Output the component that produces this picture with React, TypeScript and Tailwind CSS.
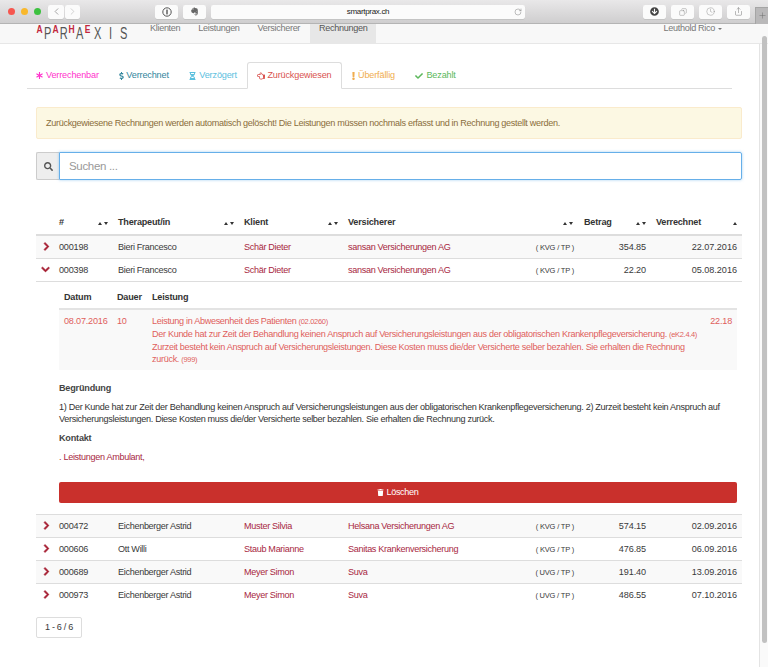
import { Fragment } from "react";
import { Clock, Copy, RotateCw, Share, ChevronLeft, ChevronRight as ChevronR, Plus } from "lucide-react";
import {
  FaArrowCircleDown,
  FaAsterisk,
  FaCheck,
  FaChevronDown,
  FaChevronRight,
  FaDollarSign,
  FaEvernote,
  FaExclamation,
  FaHourglassHalf,
  FaRegHandPointLeft,
  FaSearch,
  FaTrash,
} from "react-icons/fa";

const rows = [
  { id: "000198", therapist: "Bieri Francesco", client: "Schär Dieter", insurer: "sansan Versicherungen AG", law: "( KVG / TP )", amount: "354.85", date: "22.07.2016", open: false },
  { id: "000398", therapist: "Bieri Francesco", client: "Schär Dieter", insurer: "sansan Versicherungen AG", law: "( KVG / TP )", amount: "22.20", date: "05.08.2016", open: true },
  { id: "000472", therapist: "Eichenberger Astrid", client: "Muster Silvia", insurer: "Helsana Versicherungen AG", law: "( KVG / TP )", amount: "574.15", date: "02.09.2016", open: false },
  { id: "000606", therapist: "Ott Willi", client: "Staub Marianne", insurer: "Sanitas Krankenversicherung", law: "( KVG / TP )", amount: "476.85", date: "06.09.2016", open: false },
  { id: "000689", therapist: "Eichenberger Astrid", client: "Meyer Simon", insurer: "Suva", law: "( UVG / TP )", amount: "191.40", date: "13.09.2016", open: false },
  { id: "000973", therapist: "Eichenberger Astrid", client: "Meyer Simon", insurer: "Suva", law: "( UVG / TP )", amount: "486.55", date: "07.10.2016", open: false },
];

const logoLetters = [
  { c: "A", w: "w-[7px]", red: true },
  { c: "P", w: "w-[9px]", red: false },
  { c: "A", w: "w-[7px]", red: true },
  { c: "R", w: "w-[9px]", red: false },
  { c: "H", w: "w-[7px]", red: true },
  { c: "A", w: "w-[9px]", red: false },
  { c: "E", w: "w-[7px]", red: true },
  { c: "X", w: "w-[13px]", red: false },
  { c: "I", w: "w-[13px]", red: false },
  { c: "S", w: "w-[13px]", red: false },
];

function ToolButton({ className, children }: { className: string; children: React.ReactNode }) {
  return (
    <div className={`flex h-[14px] items-center justify-center rounded-[2px] bg-[#fbfbfb] shadow-[0_0.5px_0.5px_#b5b5b5] ${className}`}>
      {children}
    </div>
  );
}

function Toolbar() {
  return (
    <div className="flex h-[24px] shrink-0 items-center bg-gradient-to-b from-[#e9e8e9] to-[#cfcecf] border-b border-[#b4b4b4]">
      <div className="ml-[8px] flex w-[33px] gap-[5.5px]">
        <div className="size-[7.5px] rounded-full bg-[#f6564f]" />
        <div className="size-[7.5px] rounded-full bg-[#f9b82c]" />
        <div className="size-[7.5px] rounded-full bg-[#3cc13f]" />
      </div>
      <div className="ml-[7px] flex gap-px">
        <ToolButton className="w-[16px]"><ChevronLeft size={11} strokeWidth={1.4} className="text-[#777]" /></ToolButton>
        <ToolButton className="w-[15px]"><ChevronR size={11} strokeWidth={1.4} className="text-[#bbb]" /></ToolButton>
      </div>
      <ToolButton className="ml-[75px] w-[23px]">
        <svg width="10" height="10" viewBox="0 0 10 10">
          <circle cx="5" cy="5" r="4.2" fill="none" stroke="#555" strokeWidth="1" />
          <rect x="4.3" y="2.6" width="1.4" height="4.8" fill="#555" />
        </svg>
      </ToolButton>
      <ToolButton className="ml-[5px] w-[23px]"><FaEvernote size={9} className="text-[#666]" /></ToolButton>
      <ToolButton className="ml-[5px] w-[314px] relative">
        <span className="text-[8px] text-[#222]">smartprax.ch</span>
        <RotateCw size={8} strokeWidth={1.4} className="absolute right-[3px] top-[3px] text-[#777]" />
      </ToolButton>
      <ToolButton className="ml-[118px] w-[23px]"><FaArrowCircleDown size={9} className="text-[#444]" /></ToolButton>
      <ToolButton className="ml-[5px] w-[23px]"><Copy size={8} strokeWidth={1.2} className="text-[#777] -scale-x-100" /></ToolButton>
      <ToolButton className="ml-[5px] w-[23px]"><Clock size={9} strokeWidth={1} className="text-[#777]" /></ToolButton>
      <ToolButton className="ml-[5px] w-[23px]"><Share size={9} strokeWidth={1.2} className="text-[#666]" /></ToolButton>
      <div className="ml-[5px] mt-[7px] flex h-[17px] flex-1 items-center justify-center bg-[#b9b8b9] border-l border-t border-[#a5a5a5]">
        <Plus size={9} strokeWidth={1.2} className="text-[#666]" />
      </div>
    </div>
  );
}

function Navbar() {
  return (
    <div className="flex h-[20px] shrink-0 border-b border-[#e7e7e7] bg-[#f8f8f8] text-[#777]">
      <div className="ml-[36px] flex h-[19px] w-[105px] items-start">
        {logoLetters.map((l, i) =>
          l.red ? (
            <span key={i} className={`${l.w} origin-top scale-y-[1.25] text-center text-[8.5px] leading-[8px] font-bold text-[#c2273d]`}>{l.c}</span>
          ) : (
            <span key={i} className={`${l.w} mt-[1px] origin-top scale-y-[1.3] scale-x-[0.85] text-center text-[13px] leading-[13px] text-[#555]`}>{l.c}</span>
          )
        )}
      </div>
      <div className="flex">
        {["Klienten", "Leistungen", "Versicherer"].map((n) => (
          <span key={n} className="px-[9px] leading-[9px]">{n}</span>
        ))}
        <span className="ml-px bg-[#e7e7e7] px-[9px] leading-[9px] text-[#555]">Rechnungen</span>
      </div>
      <div className="ml-auto mr-[46px] flex h-[9px] items-center gap-[3px]">
        <span>Leuthold Rico</span>
        <span className="mt-px border-x-[2.5px] border-t-[2.5px] border-x-transparent border-t-[#777]" />
      </div>
    </div>
  );
}

function Tabs() {
  const tabs = [
    { label: "Verrechenbar", color: "text-[#ff33cc]", gap: "gap-[3px]", icon: <FaAsterisk size={7} /> },
    { label: "Verrechnet", color: "text-[#31859c]", gap: "gap-[2px]", icon: <FaDollarSign size={8} className="w-[5px]" /> },
    { label: "Verzögert", color: "text-[#5bc0de]", gap: "gap-[3px]", icon: <FaHourglassHalf size={8} className="w-[7px]" /> },
    { label: "Zurückgewiesen", color: "text-[#d9534f]", gap: "gap-[2px]", icon: <FaRegHandPointLeft size={8} />, active: true },
    { label: "Überfällig", color: "text-[#f0ad4e]", gap: "gap-[3px]", icon: <FaExclamation size={8} className="w-[3px]" /> },
    { label: "Bezahlt", color: "text-[#5cb85c]", gap: "gap-[3px]", icon: <FaCheck size={8} /> },
  ];
  return (
    <div className="ml-[27px] mt-[18px] flex h-[27px] w-[705px] border-b border-[#ddd] tracking-[-0.15px]">
      {tabs.map((t, i) => (
        <div
          key={t.label}
          className={`mr-[0.5px] flex h-[27px] items-center rounded-t-[3px] border px-[9px] ${i === 0 ? "-ml-px" : ""} ${t.gap} ${t.color} ${
            t.active ? "border-[#ddd] border-b-white bg-white" : "border-transparent"
          }`}
        >
          {t.icon}
          <span>{t.label}</span>
        </div>
      ))}
    </div>
  );
}

function SortMark({ down = true }: { down?: boolean }) {
  return (
    <span className="flex items-center justify-end gap-[2px]">
      <span className="border-x-[2px] border-b-[3.5px] border-x-transparent border-b-[#333]" />
      {down && <span className="border-x-[2px] border-t-[3.5px] border-x-transparent border-t-[#333]" />}
    </span>
  );
}

function HeaderCell({ label, down = true, pad = "pr-[5px]" }: { label: string; down?: boolean; pad?: string }) {
  return (
    <th className={`pl-[5px] pb-[4px] text-left align-bottom font-bold tracking-[-0.2px] text-[#333] ${pad}`}>
      <div className="flex items-center justify-between">
        <span>{label}</span>
        <SortMark down={down} />
      </div>
    </th>
  );
}

function DetailRow() {
  return (
    <tr>
      <td colSpan={7} className="border-t border-[#ddd] pl-[23px] pr-[5px] pt-[7px] pb-[11px]">
        <div className="text-[#333]">
          <div className="flex h-[21px] items-center border-b-2 border-[#e3e3e3] font-bold tracking-[-0.2px]">
            <span className="w-[58px] pl-[5px]">Datum</span>
            <span className="w-[35px]">Dauer</span>
            <span>Leistung</span>
          </div>
          <div className="flex h-[60px] bg-[#f9f9f9] pt-[5px] text-[#df5e5c]">
            <span className="w-[58px] shrink-0 pl-[5px] leading-[12.3px] tracking-[-0.2px]">08.07.2016</span>
            <span className="w-[35px] shrink-0 leading-[12.3px]">10</span>
            <div className="w-[548px] shrink-0 leading-[12.3px]">
              <p>Leistung in Abwesenheit des Patienten <span className="text-[7.5px]">(02.0260)</span></p>
              <p>
                Der Kunde hat zur Zeit der Behandlung keinen Anspruch auf Versicherungsleistungen aus der obligatorischen Krankenpflegeversicherung. <span className="text-[7.5px]">(eK2.4.4)</span>
              </p>
              <p>
                Zurzeit besteht kein Anspruch auf Versicherungsleistungen. Diese Kosten muss die/der Versicherte selber bezahlen. Sie erhalten die Rechnung zurück. <span className="text-[7.5px]">(999)</span>
              </p>
            </div>
            <span className="ml-auto pr-[5px] leading-[12.3px] tracking-[-0.2px]">22.18</span>
          </div>
          <p className="mt-[12px] font-bold leading-[13px] tracking-[-0.2px] text-[#444]">Begründung</p>
          <p className="mt-[6px] leading-[12.5px]">
            1) Der Kunde hat zur Zeit der Behandlung keinen Anspruch auf Versicherungsleistungen aus der obligatorischen Krankenpflegeversicherung. 2) Zurzeit besteht kein Anspruch auf Versicherungsleistungen. Diese Kosten muss die/der Versicherte selber bezahlen. Sie erhalten die Rechnung zurück.
          </p>
          <p className="mt-[6px] font-bold leading-[13px] tracking-[-0.2px] text-[#444]">Kontakt</p>
          <p className="mt-[6px] leading-[13px] text-[#a8283f]">. Leistungen Ambulant,</p>
          <button className="mt-[18px] flex h-[21px] w-full items-center justify-center gap-[2px] rounded-[2px] bg-[#c9302c] pt-[1px] text-white">
            <FaTrash size={7} />
            <span>Löschen</span>
          </button>
        </div>
      </td>
    </tr>
  );
}

export default function App() {
  return (
    <div className="flex h-[667px] w-[768px] flex-col overflow-hidden bg-white font-['Liberation_Sans',Arial,sans-serif] text-[9.1px] tracking-[-0.32px] text-[#3a3a3a]">
      <Toolbar />
      <Navbar />
      <div className="flex min-h-0 flex-1">
        <div className="min-w-0 flex-1">
          <Tabs />

          <div className="ml-[36px] mt-[18px] flex h-[32px] w-[706px] items-center rounded-[2px] border border-[#faebcc] bg-[#fcf8e3] px-[9px] pt-[2px] text-[#8a6d3b]">
            Zurückgewiesene Rechnungen werden automatisch gelöscht! Die Leistungen müssen nochmals erfasst und in Rechnung gestellt werden.
          </div>

          <div className="ml-[36px] mt-[13px] flex h-[28px] w-[706px]">
            <div className="flex w-[23px] items-center justify-center rounded-l-[2px] border border-r-0 border-[#ccc] bg-[#eee] text-[#555]">
              <FaSearch size={9} />
            </div>
            <div className="flex flex-1 items-center rounded-r-[2px] border border-[#66afe9] px-[9px] pt-[2px] text-[11.5px] text-[#999] shadow-[0_0_3px_rgba(102,175,233,0.6)]">
              Suchen ...
            </div>
          </div>

          <table className="ml-[36px] mt-[33px] w-[706px] table-fixed border-collapse">
            <colgroup>
              <col className="w-[18px]" />
              <col className="w-[59px]" />
              <col className="w-[126px]" />
              <col className="w-[104px]" />
              <col className="w-[236px]" />
              <col className="w-[72px]" />
              <col className="w-[91px]" />
            </colgroup>
            <thead>
              <tr className="h-[22px] border-b-2 border-[#ddd]">
                <th />
                <HeaderCell label="#" />
                <HeaderCell label="Therapeut/in" />
                <HeaderCell label="Klient" />
                <HeaderCell label="Versicherer" pad="pr-[6px]" />
                <HeaderCell label="Betrag" />
                <HeaderCell label="Verrechnet" down={false} />
              </tr>
            </thead>
            <tbody>
              {rows.map((r, i) => (
                <Fragment key={r.id}>
                  <tr className={`h-[23px] border-t border-[#ddd] ${i % 2 === 0 ? "bg-[#f9f9f9]" : ""}`}>
                    <td className="pl-[6px] text-[#a51c30]">
                      {r.open ? (
                        <FaChevronDown size={9} stroke="currentColor" strokeWidth={40} className="-ml-[1px]" />
                      ) : (
                        <FaChevronRight size={9} stroke="currentColor" strokeWidth={40} />
                      )}
                    </td>
                    <td className="px-[5px] pt-[2px] tracking-[-0.2px]">{r.id}</td>
                    <td className="px-[5px] pt-[2px]">{r.therapist}</td>
                    <td className="px-[5px] pt-[2px] text-[#a8283f]">{r.client}</td>
                    <td className="px-[5px] pt-[2px]">
                      <div className="flex items-center justify-between">
                        <span className="text-[#a8283f]">{r.insurer}</span>
                        <span className="text-[7.5px] tracking-[-0.2px]">{r.law}</span>
                      </div>
                    </td>
                    <td className="px-[5px] pt-[2px] text-right tracking-[-0.1px]">{r.amount}</td>
                    <td className="px-[5px] pt-[2px] text-right tracking-[-0.02px]">{r.date}</td>
                  </tr>
                  {r.open && <DetailRow />}
                </Fragment>
              ))}
            </tbody>
          </table>

          <div className="ml-[36px] mt-[11px] flex h-[21px] w-[46px] items-center justify-center rounded-[2px] border border-[#ddd]">
            1 - 6 / 6
          </div>
        </div>

        {/* scrollbar */}
        <div className="w-[9px] shrink-0 border-l border-[#e4e4e4] bg-[#fafafa] px-[1.5px]">
          <div className="mt-[-8px] h-[607px] rounded-full bg-[#c1c1c1]" />
        </div>
      </div>
    </div>
  );
}
